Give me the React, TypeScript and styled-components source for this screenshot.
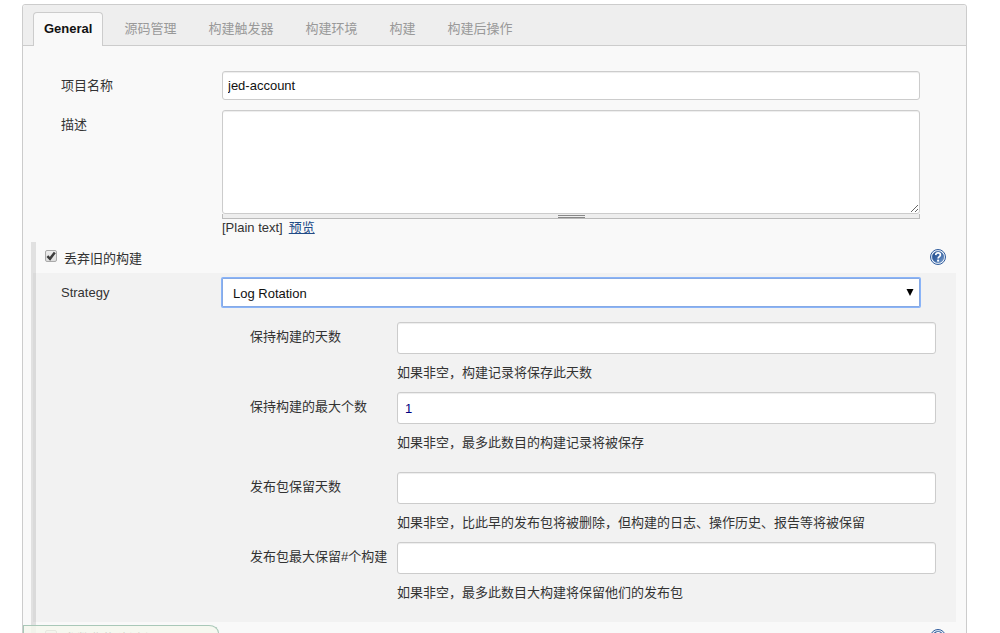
import React, { useState } from "react";
import styled, { createGlobalStyle, css } from "styled-components";

const GlobalStyle = createGlobalStyle`
  *, *::before, *::after { box-sizing: border-box; }
  body {
    margin: 0;
    background: #fff;
    color: #333;
    font-family: "Liberation Sans", "Noto Sans CJK SC", sans-serif;
    font-size: 13px;
    line-height: 20px;
  }
  input, select, textarea, button { font: inherit; color: inherit; margin: 0; }
`;

const Page = styled.main`
  height: 100vh;
  overflow: hidden auto;
  scrollbar-width: none;
  padding: 4px 33px 0 22px;
`;

const Panel = styled.form`
  border: 1px solid #ccc;
  border-radius: 3px;
  background: #f9f9f9;
`;

const TabBar = styled.nav`
  display: flex;
  gap: 10px;
  padding: 7px 10px 0;
  background: #eee;
  border-bottom: 1px solid #ccc;
  border-radius: 3px 3px 0 0;
`;

const Tab = styled.button<{ $active?: boolean }>`
  height: 34px;
  margin-bottom: -1px;
  padding: 0 10px 2px;
  border: 1px solid transparent;
  border-bottom: 0;
  border-radius: 4px 4px 0 0;
  background: transparent;
  color: #999;
  cursor: pointer;
  ${({ $active }) =>
    $active &&
    css`
      border-color: #ccc;
      background: #f9f9f9;
      color: #111;
      font-weight: bold;
    `}
`;

const Body = styled.div`
  padding: 25px 10px 0 8px;
`;

const Row = styled.div`
  display: grid;
  grid-template-columns: 191px minmax(0, 1fr) 36px;
  margin-bottom: 10px;
`;

const NoteRow = styled(Row)`
  margin-bottom: 5px;
`;

const RowLabel = styled.label`
  height: 29px;
  padding-left: 30px;
  line-height: 30px;
`;

const fieldBox = css`
  display: block;
  width: 100%;
  border: 1px solid #ccc;
  border-radius: 3px;
  background: #fff;
  box-shadow: inset 0 1px 1px rgba(0, 0, 0, 0.075);
  outline: 0;
`;

const TextInput = styled.input`
  ${fieldBox}
  height: 29px;
  padding: 0 5px;
  color: #111;
`;

const TextArea = styled.textarea`
  ${fieldBox}
  height: 104px;
  padding: 5px;
  resize: vertical;
`;

const DragBar = styled.div`
  display: flex;
  justify-content: center;
  height: 5px;
  padding-top: 1px;
  border: solid #bbb;
  border-width: 0 1px 1px;
  background: #eee;
`;

const Grip = styled.span`
  width: 27px;
  height: 3px;
  border: solid #888;
  border-width: 1px 0;
`;

const Note = styled.div`
  display: flex;
  gap: 6px;
  line-height: 18px;
`;

const PreviewLink = styled.a`
  color: #204a87;
`;

const OptionBlock = styled.section`
  border-left: 2px solid #e1e1e1;
`;

const OptionHeader = styled.div`
  display: flex;
  justify-content: space-between;
  height: 31px;
  padding: 7px 10px 0 9px;
  border-left: 3px solid #e1e1e1;
`;

const CheckLabel = styled.label`
  display: flex;
  gap: 7px;
  line-height: 20px;
`;

const Check = styled.input`
  appearance: none;
  display: grid;
  place-items: center;
  width: 12px;
  height: 12px;
  margin-top: 1px;
  border: 1px solid #aaa;
  border-radius: 2px;
  background: linear-gradient(#eee, #ddd);
`;

const CheckBoxWrap = styled.span`
  display: grid;
  align-content: start;
  > * { grid-area: 1 / 1; }
  > svg { pointer-events: none; }
`;

const HelpButton = styled.button`
  width: 16px;
  height: 16px;
  padding: 0;
  border: 0;
  background: none;
  cursor: pointer;
  svg { display: block; }
`;

const Nested = styled.div`
  padding: 5px 0 19px;
  border-left: 3px solid #dadada;
  background: #f2f2f2;
`;

const StrategyRow = styled(Row)`
  grid-template-columns: 186px minmax(0, 1fr) 36px;
  margin-bottom: 15px;
`;

const StrategyLabel = styled(RowLabel)`
  padding-left: 25px;
`;

const SelectWrap = styled.div`
  position: relative;
  svg {
    position: absolute;
    top: 11px;
    right: 6px;
    pointer-events: none;
  }
`;

const Select = styled.select`
  ${fieldBox}
  appearance: none;
  height: 29px;
  padding: 2px 20px 0 10px;
  border-color: #86aae6;
  border-radius: 1px;
  color: #111;
  box-shadow: 0 0 0 1px #8ab4f8;
`;

const FieldGroup = styled.div`
  display: grid;
  gap: 9px;
  padding: 0 20px 0 214px;
  & + & { margin-top: 19px; }
`;

const Field = styled.div`
  display: grid;
  grid-template-columns: 147px minmax(0, 1fr);
`;

const FieldLabel = styled.label`
  padding-top: 5px;
  white-space: nowrap;
`;

const NumberInput = styled(TextInput)`
  height: 32px;
  padding: 0 7px;
  color: #000080;
`;

const Hint = styled.p`
  margin: 9px 0 0;
`;

const SaveBar = styled.div`
  position: fixed;
  left: 23px;
  bottom: 0;
  width: 196px;
  height: 8px;
  border: solid #a9c8b8;
  border-width: 1px 1px 0;
  border-top-right-radius: 10px 8px;
  background: rgba(245, 248, 238, 0.8);
`;

const HelpIcon = () => (
  <svg width="16" height="16" viewBox="0 0 16 16" aria-hidden="true">
    <defs>
      <linearGradient id="help-fill" x1="0" y1="0" x2="1" y2="1">
        <stop offset="0" stopColor="#204a87" />
        <stop offset="0.5" stopColor="#3b66a5" />
        <stop offset="1" stopColor="#7da3d3" />
      </linearGradient>
    </defs>
    <circle cx="8" cy="8" r="7.5" fill="#eef4fb" stroke="#2f5b9c" />
    <circle cx="8" cy="8" r="5.8" fill="url(#help-fill)" stroke="#2f5b9c" strokeWidth="0.4" />
    <path d="M5.7 6.1C5.8 4.6 6.8 3.9 8.1 3.9s2.3.8 2.3 2c0 1.7-2.3 1.7-2.3 3.6" fill="none" stroke="#fff" strokeWidth="1.7" />
    <circle cx="8.1" cy="11.7" r="1.1" fill="#fff" />
  </svg>
);

const Option = ({ id, text, checked, children }: { id: string; text: string; checked: boolean; children?: React.ReactNode }) => {
  const [on, setOn] = useState(checked);
  return (
    <OptionBlock>
      <OptionHeader>
        <CheckLabel htmlFor={id}>
          <CheckBoxWrap>
            <Check id={id} type="checkbox" checked={on} onChange={(e) => setOn(e.target.checked)} />
            {on && (
              <svg width="12" height="13" viewBox="0 0 12 13" aria-hidden="true">
                <path d="M2.4 7.2l2.6 2.6 4.8-6.4" fill="none" stroke="#3c3c3c" strokeWidth="2.5" />
              </svg>
            )}
          </CheckBoxWrap>
          {text}
        </CheckLabel>
        <HelpButton type="button" aria-label={text}>
          <HelpIcon />
        </HelpButton>
      </OptionHeader>
      {on && children}
    </OptionBlock>
  );
};

const tabs = ["General", "源码管理", "构建触发器", "构建环境", "构建", "构建后操作"];

const groups = [
  [
    { id: "days", label: "保持构建的天数", value: "", hint: "如果非空，构建记录将保存此天数" },
    { id: "count", label: "保持构建的最大个数", value: "1", hint: "如果非空，最多此数目的构建记录将被保存" },
  ],
  [
    { id: "artifact-days", label: "发布包保留天数", value: "", hint: "如果非空，比此早的发布包将被删除，但构建的日志、操作历史、报告等将被保留" },
    { id: "artifact-count", label: "发布包最大保留#个构建", value: "", hint: "如果非空，最多此数目大构建将保留他们的发布包" },
  ],
];

export default function App() {
  const [active, setActive] = useState(tabs[0]);
  return (
    <>
      <GlobalStyle />
      <Page>
        <Panel>
          <TabBar>
            {tabs.map((name) => (
              <Tab key={name} type="button" $active={name === active} onClick={() => setActive(name)}>
                {name}
              </Tab>
            ))}
          </TabBar>
          <Body>
            <Row>
              <RowLabel htmlFor="name">项目名称</RowLabel>
              <TextInput id="name" defaultValue="jed-account" />
            </Row>
            <NoteRow>
              <RowLabel htmlFor="description">描述</RowLabel>
              <div>
                <TextArea id="description" />
                <DragBar>
                  <Grip />
                </DragBar>
                <Note>
                  <span>[Plain text]</span>
                  <PreviewLink href="#preview">预览</PreviewLink>
                </Note>
              </div>
            </NoteRow>
            <Option id="discard" text="丢弃旧的构建" checked>
              <Nested>
                <StrategyRow>
                  <StrategyLabel htmlFor="strategy">Strategy</StrategyLabel>
                  <SelectWrap>
                    <Select id="strategy">
                      <option>Log Rotation</option>
                    </Select>
                    <svg width="8" height="7" viewBox="0 0 8 7" aria-hidden="true">
                      <path d="M0.5 0h7L4 7z" fill="#000" />
                    </svg>
                  </SelectWrap>
                </StrategyRow>
                {groups.map((fields, i) => (
                  <FieldGroup key={i}>
                    {fields.map((f) => (
                      <Field key={f.id}>
                        <FieldLabel htmlFor={f.id}>{f.label}</FieldLabel>
                        <div>
                          <NumberInput id={f.id} defaultValue={f.value} />
                          <Hint>{f.hint}</Hint>
                        </div>
                      </Field>
                    ))}
                  </FieldGroup>
                ))}
              </Nested>
            </Option>
            <Option id="parameterized" text="参数化构建过程" checked={false} />
          </Body>
        </Panel>
        <SaveBar />
      </Page>
    </>
  );
}
